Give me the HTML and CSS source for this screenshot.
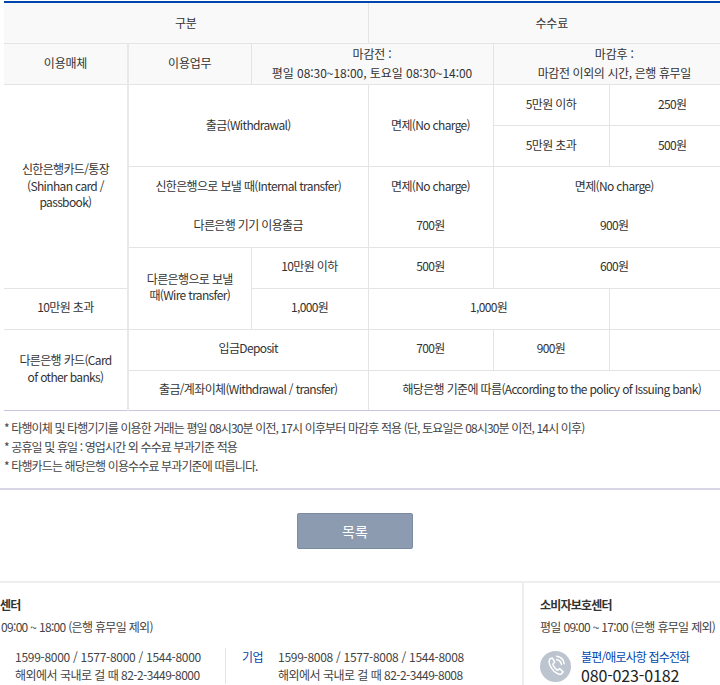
FILE: index.html
```html
<!DOCTYPE html>
<html lang="ko">
<head>
<meta charset="utf-8">
<title>수수료 안내</title>
<link rel="stylesheet" href="styles.css">
</head>
<body>
<main class="page">
  <table class="fee-table">
    <colgroup>
      <col class="c1"><col class="c2"><col class="c3"><col class="c4"><col class="c5"><col class="c6">
    </colgroup>
    <thead>
      <tr class="r41 pad1"><th colspan="3">구분</th><th colspan="3">수수료</th></tr>
      <tr class="r41">
        <th class="lead">이용매체</th><th>이용업무</th>
        <th colspan="2">마감전 :<br><span class="sp-wide">평일 08:30~18:00, 토요일 08:30~14:00</span></th>
        <th colspan="2">마감후 :<br><span class="sp-narrow">마감전 이외의 시간, 은행 휴무일</span></th>
      </tr>
    </thead>
    <tbody>
      <tr class="r41 pad1">
        <td class="lead" rowspan="5">신한은행카드/통장<br>(Shinhan card /<br>passbook)</td>
        <td colspan="2" rowspan="2">출금(Withdrawal)</td>
        <td rowspan="2">면제(No charge)</td>
        <td>5만원 이하</td><td>250원</td>
      </tr>
      <tr class="r41 pad1"><td>5만원 초과</td><td>500원</td></tr>
      <tr class="r40 pad1 open-bottom"><td colspan="2">신한은행으로 보낼 때(Internal transfer)</td><td>면제(No charge)</td><td colspan="2">면제(No charge)</td></tr>
      <tr class="r41 open-top"><td colspan="2">다른은행 기기 이용출금</td><td>700원</td><td colspan="2">900원</td></tr>
      <tr class="r41"><td rowspan="2">다른은행으로 보낼<br>때(Wire transfer)</td><td>10만원 이하</td><td>500원</td><td colspan="2">600원</td></tr>
      <tr class="r41"><td class="lead">10만원 초과</td><td>1,000원</td><td colspan="2">1,000원</td><td></td></tr>
      <tr class="r41"><td class="lead" rowspan="2">다른은행 카드(Card<br>of other banks)</td><td colspan="2">입금Deposit</td><td>700원</td><td>900원</td><td></td></tr>
      <tr class="r40 last"><td colspan="2">출금/계좌이체(Withdrawal / transfer)</td><td colspan="3">해당은행 기준에 따름(According to the policy of Issuing bank)</td></tr>
    </tbody>
  </table>
  <ul class="notes">
    <li>* 타행이체 및 타행기기를 이용한 거래는 평일 08시30분 이전, 17시 이후부터 마감후 적용 (단, 토요일은 08시30분 이전, 14시 이후)</li>
    <li>* 공휴일 및 휴일 : 영업시간 외 수수료 부과기준 적용</li>
    <li>* 타행카드는 해당은행 이용수수료 부과기준에 따릅니다.</li>
  </ul>
  <div class="actions"><button class="btn-list" type="button">목록</button></div>
  <footer class="contact">
    <section class="center">
      <h3 class="contact-title">센터</h3>
      <p class="hours">09:00 ~ 18:00 (은행 휴무일 제외)</p>
      <div class="phones">
        <div class="phone-group first">
          <p>1599-8000 / 1577-8000 / 1544-8000</p>
          <p class="overseas">해외에서 국내로 걸 때 82-2-3449-8000</p>
        </div>
        <div class="phone-group second">
          <span class="label">기업</span>
          <div>
            <p>1599-8008 / 1577-8008 / 1544-8008</p>
            <p class="overseas">해외에서 국내로 걸 때 82-2-3449-8008</p>
          </div>
        </div>
      </div>
    </section>
    <section class="consumer">
      <h3 class="contact-title">소비자보호센터</h3>
      <p class="hours">평일 09:00 ~ 17:00 (은행 휴무일 제외)</p>
      <div class="hotline">
        <span class="phone-icon">
          <svg width="31" height="31" viewBox="0 0 31 31" fill="none" stroke="#fff" stroke-width="1.5" stroke-linecap="round" stroke-linejoin="round">
            <path d="M10.2 7.8l2.1-.9 2.4 4.3-1.6 1.5c-.3.4-.3.8-.1 1.3.8 2 2.3 3.9 4 5 .4.2.8.2 1.1-.1l1.5-1.3 3.5 3.3-1.5 1.7c-.7.7-1.6.9-2.5.6-3.8-1.2-7-4.3-8.9-8.4-1-2.2-1.3-4.3-.9-5.7.2-.6.5-1 1-1.3z"/>
            <path d="M16.5 8.5c2.6.5 4.5 2.5 5 5.1"/>
            <path d="M16.8 5.3c3.9.6 6.8 3.5 7.4 7.4"/>
          </svg>
        </span>
        <div class="hotline-text">
          <p class="hotline-label">불편/애로사항 접수전화</p>
          <p class="hotline-number">080-023-0182</p>
        </div>
      </div>
    </section>
  </footer>
</main>
</body>
</html>
```
FILE: styles.css
```css
* { box-sizing: border-box; }
html, body { margin: 0; padding: 0; overflow: hidden; background: #fff; }
body {
  width: 720px;
  height: 685px;
  font-family: "Noto Sans CJK KR", "Noto Sans", sans-serif;
  font-size: 12px;
  color: #333;
}
p, h3, ul { margin: 0; padding: 0; }
.page { padding-top: 1px; width: 735px; }
.fee-table {
  margin-left: 4px;
  width: 731px;
  table-layout: fixed;
  border-collapse: collapse;
  border-top: 2px solid #0046ad;
}
.c1 { width: 124px; }
.c2 { width: 123px; }
.c3 { width: 117px; }
.c4 { width: 125px; }
.c5 { width: 116px; }
.c6 { width: 126px; }
.fee-table th, .fee-table td {
  padding: 0 4px 2px;
  border: 1px solid #e4e4e4;
  text-align: center;
  vertical-align: middle;
  font-weight: 400;
  line-height: 16.5px;
  letter-spacing: -0.65px;
  color: #333;
}
.fee-table th { background: #f9f9f9; line-height: 19px; letter-spacing: -0.2px; }
.fee-table .pad1 > th, .fee-table .pad1 > td { padding-bottom: 0; }
.fee-table tr > :first-child { border-left: 0; }
.fee-table .lead { border-right: 2px solid #e8e8e8; }
.fee-table tr > :last-child { border-right: 0; }
.sp-wide { letter-spacing: -0.05px; }
.sp-narrow { letter-spacing: -0.4px; }
.r41 { height: 41px; }
.r40 { height: 40px; }
.fee-table .open-bottom td { border-bottom: 0; }
.fee-table .open-top td { border-top: 0; }
.fee-table .last td, .fee-table .lead[rowspan="2"] { border-bottom: 1px solid #c6c6de; }
.notes {
  list-style: none;
  width: 720px;
  height: 79px;
  padding: 7px 0 0 4px;
  border-bottom: 2px solid #d6d6e6;
  line-height: 19px;
  letter-spacing: -0.87px;
  color: #444;
}
.actions { display: flex; justify-content: center; width: 720px; padding: 23px 10px 32px 0; }
.btn-list {
  width: 116px;
  height: 36px;
  border: 1px solid #7a8ba3;
  border-radius: 2px;
  background: #8c9bb0;
  color: #fff;
  font: 400 14px "Noto Sans CJK KR", sans-serif;
}
.contact { display: flex; width: 720px; height: 104px; border-top: 2px solid #eee; overflow: hidden; }
.center { flex: none; width: 522px; padding-top: 13px; overflow: hidden; }
.consumer { flex: 1; border-left: 2px solid #eee; padding: 13px 0 0 16px; white-space: nowrap; }
.contact-title { font-size: 12px; font-weight: 700; line-height: 18px; letter-spacing: -0.77px; color: #333; }
.hours { margin-top: 4px; line-height: 18px; letter-spacing: -0.68px; color: #444; }
.center .hours { margin-left: 1px; }
.phones { display: flex; margin-top: 12px; }
.phone-group { line-height: 18px; letter-spacing: -0.28px; color: #444; white-space: nowrap; }
.overseas { letter-spacing: -0.52px; }
.phone-group.first { width: 226px; padding-left: 15px; border-right: 1px solid #e4e4e4; }
.phone-group.second { display: flex; padding-left: 16px; }
.label { width: 36px; color: #0046ad; letter-spacing: -0.6px; }
.hotline { display: flex; margin-top: 15px; gap: 10px; }
.phone-icon {
  display: flex;
  flex: none;
  width: 31px;
  height: 31px;
  border-radius: 50%;
  background: #bcc4cf;
}
.hotline-text { margin-top: -3px; }
.hotline-label { color: #0046ad; line-height: 18px; letter-spacing: -0.85px; }
.hotline-number { font-size: 16px; line-height: 19px; letter-spacing: -0.15px; color: #222; font-weight: 400; }
```
